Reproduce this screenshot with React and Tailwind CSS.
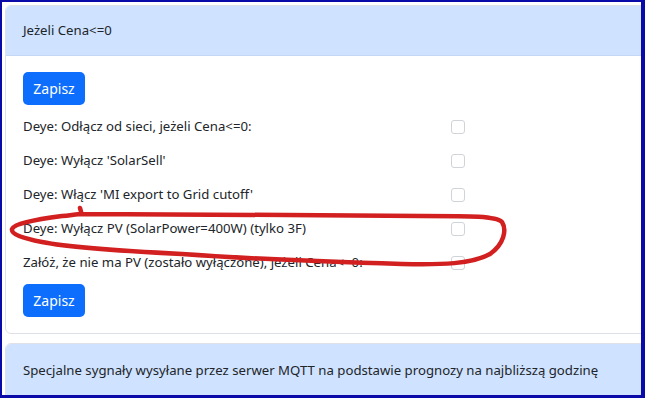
const rows = [
  "Deye: Odłącz od sieci, jeżeli Cena<=0:",
  "Deye: Wyłącz 'SolarSell'",
  "Deye: Włącz 'MI export to Grid cutoff'",
  "Deye: Wyłącz PV (SolarPower=400W) (tylko 3F)",
  "Załóż, że nie ma PV (zostało wyłączone), jeżeli Cena<=0:",
];

function SaveButton({ className = "" }) {
  return (
    <button
      className={`h-[33px] w-[62px] rounded-[5px] bg-[#0d6efd] text-white text-[14px] ${className}`}
    >
      Zapisz
    </button>
  );
}

export default function App() {
  return (
    <div
      className="relative w-[645px] h-[398px] overflow-hidden bg-white border-l-2 border-t-2 border-r-4 border-b-[3px] border-[#0a0aa8] text-[#212529] text-[13.2px]"
      style={{ fontFamily: '"Noto Sans", "Open Sans", sans-serif' }}
    >
      <div className="pl-[3px] pt-[3px] w-[700px]">
        {/* card 1 */}
        <div className="rounded-[6px] border border-[#dee2e6] overflow-hidden">
          <div className="h-[50px] flex items-center px-[17px] bg-[#cfe2ff] border-b border-[#c5d7f2]">
            Jeżeli Cena&lt;=0
          </div>
          <div className="px-[17px] pt-[16px] pb-[16px]">
            <SaveButton />
            <div className="mt-[5px]">
              {rows.map((r) => (
                <div key={r} className="h-[34px] flex items-center">
                  <span className="w-[428px]">{r}</span>
                  <span className="w-[14px] h-[14px] rounded-[3px] border border-[#d0d4d8] bg-white" />
                </div>
              ))}
            </div>
            <SaveButton className="mt-[4px]" />
          </div>
        </div>

        {/* card 2 */}
        <div className="mt-[9px] rounded-t-[6px] border border-[#dee2e6] overflow-hidden">
          <div className="h-[53px] flex items-center px-[17px] bg-[#cfe2ff]">
            Specjalne sygnały wysyłane przez serwer MQTT na podstawie prognozy na najbliższą godzinę
          </div>
        </div>
      </div>

      {/* hand-drawn annotation */}
      <svg className="absolute left-0 top-0 pointer-events-none" width="645" height="398">
        <path
          d="M78 206 C79 209 79 211 80 212 C150 212 300 213 420 214 C470 214 494 214 500 220 C505 228 502 242 488 252 C470 262 440 263 400 262 C330 260 250 257 180 252 C120 249 70 246 40 240 C20 236 9 232 10 227 C12 222 30 218 60 214 C70 213 76 212 80 212"
          fill="none"
          stroke="#d21f1f"
          strokeWidth="4.5"
          strokeLinecap="round"
          strokeLinejoin="round"
        />
      </svg>
    </div>
  );
}
